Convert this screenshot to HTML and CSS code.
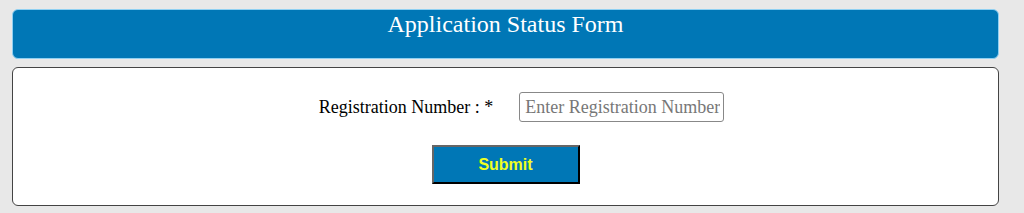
FILE: index.html
```html
<!DOCTYPE html>
<html>
<head>
  <meta charset="utf-8">
  <link rel="stylesheet" href="styles.css">
</head>
<body>
  <div class="header">
    <h1>Application Status Form</h1>
  </div>

  <form class="status-form">
    <div class="form-row">
      <label class="form-label" for="reg-no">Registration Number : *</label>
      <input id="reg-no" class="form-input" type="text" placeholder="Enter Registration Number">
    </div>
    <div class="form-actions">
      <button type="button" class="btn-submit">Submit</button>
    </div>
  </form>
</body>
</html>
```

FILE: styles.css
```css
body {
  margin: 0;
  padding: 9px 25px 0 12px;
  background: #e8e8e8;
  font-family: "Liberation Serif", "Times New Roman", serif;
  color: #000;
}

.header {
  height: 48px;
  background: #0077b6;
  border: 1px solid #8fd0f2;
  border-radius: 6px;
  text-align: center;
}

.header h1 {
  margin: 0;
  padding-top: 1px;
  font-size: 24px;
  font-weight: normal;
  color: white;
}

.status-form {
  margin-top: 8px;
  height: 139px;
  box-sizing: border-box;
  background: white;
  border: 1px solid #444;
  border-radius: 6px;
  padding-top: 24px;
}

.form-row {
  display: flex;
  align-items: center;
  justify-content: center;
  gap: 26px;
  padding-left: 32px;
}

.form-label {
  font-size: 18px;
}

.form-input {
  width: 205px;
  height: 30px;
  box-sizing: border-box;
  border: 1px solid #888;
  border-radius: 3px;
  padding: 0 3px 0 5px;
  font-family: "Liberation Serif", "Times New Roman", serif;
  font-size: 18px;
  outline: none;
}

.form-input::placeholder {
  color: #777;
}

.form-actions {
  display: flex;
  justify-content: center;
  margin-top: 23px;
}

.btn-submit {
  width: 148px;
  height: 39px;
  background: #0077b6;
  border: 2px solid;
  border-color: #666 #000 #000 #666;
  font-family: "Liberation Sans", Arial, sans-serif;
  font-size: 16px;
  font-weight: bold;
  color: #f0ff1e;
  cursor: pointer;
}
```
